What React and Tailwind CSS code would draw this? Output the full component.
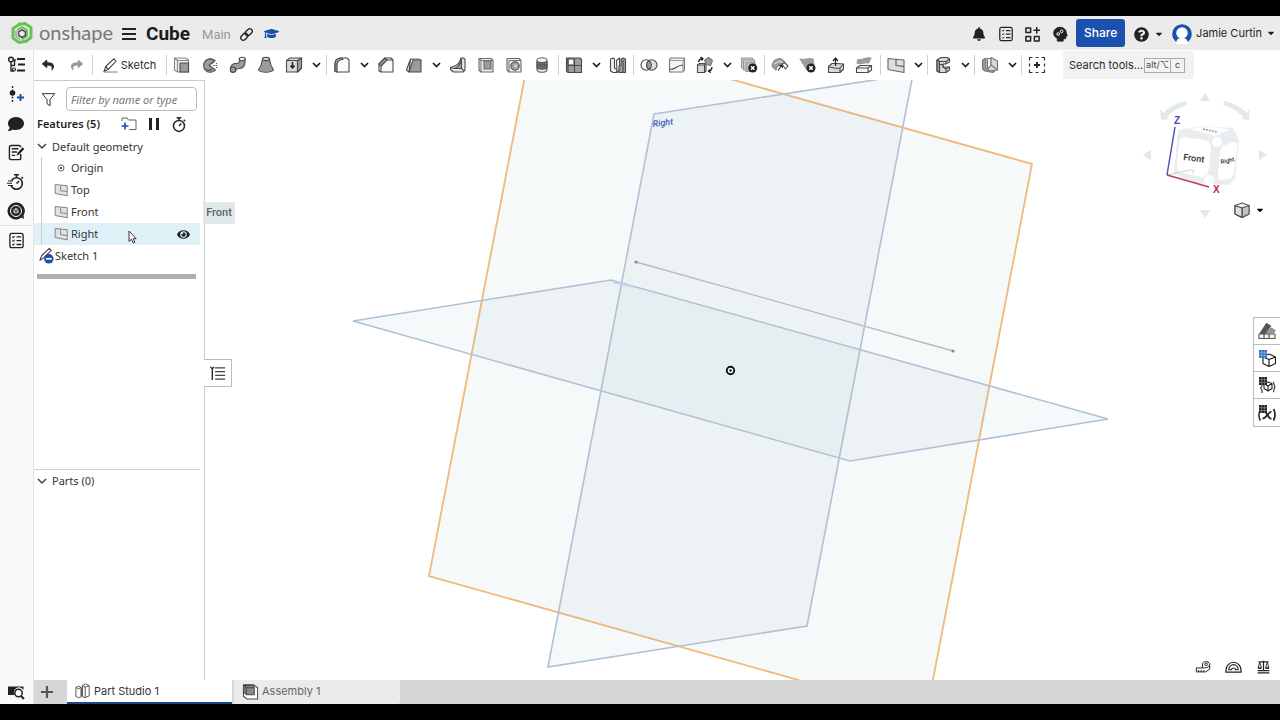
import React from "react";
import { FaReply, FaShare, FaBell, FaComment, FaGraduationCap, FaEye, FaQuestionCircle, FaCaretDown } from "react-icons/fa";

const Svg = ({ s = 18, children, className = "" }) => (
  <svg width={s} height={s} viewBox="0 0 18 18" fill="none" stroke="#4a4a4a" strokeWidth="1.1" strokeLinejoin="round" className={`shrink-0 ${className}`} aria-hidden="true">
    {children}
  </svg>
);

const G = "#9c9c9c";
const L = "#d9d9d9";

const Chevron = () => (
  <svg width="9" height="6" viewBox="0 0 9 6" fill="none" stroke="#1f1f1f" strokeWidth="1.7" aria-hidden="true">
    <path d="M1 1l3.500 3.500L8 1" />
  </svg>
);

const icons = {
  extrude: (
    <>
      <path d="M1.500 2h11l3 2v12H4.500l-3-2z" fill="#f3f3f3" stroke="#888" />
      <path d="M4.500 4.500v11.500M4.500 4.500h11M1.500 2l3 2.500" stroke="#888" />
      <path d="M7 7h8.500v9H7z" fill={G} />
    </>
  ),
  revolve: (
    <>
      <path d="M14 4.500A6.800 6.800 0 1 0 14.500 14L11 11.500 8 9l3.500-2z" fill={G} stroke="#555" />
      <path d="M14 4.500L10.500 7M4 6c1.500-3 5-3.500 7.500-2M3 12c2 3 6 3 8 1" stroke="#555" />
      <path d="M12 9.500h4.500M15.500 7v1M15.500 11v1" stroke="#555" strokeDasharray="1.500 1" />
    </>
  ),
  sweep: (
    <>
      <path d="M1.500 12.500c0-3.500 3-5 5-5 4 0 4-1 4-4.500l5.500-.5c.5 7-1.500 10-6 10-2.500 0-3 .5-3.500 3z" fill={G} />
      <ellipse cx="13.200" cy="3" rx="2.900" ry="1.800" fill="#eee" />
      <ellipse cx="4" cy="13.700" rx="2.700" ry="2.700" fill={G} />
    </>
  ),
  loft: (
    <>
      <path d="M5.500 3C5 8 3.500 11 1.500 14c2.500 3 12.500 3 15 0C14.500 11 13 8 12.500 3z" fill={G} />
      <ellipse cx="9" cy="3" rx="3.500" ry="1.600" fill="#ddd" />
    </>
  ),
  thicken: (
    <>
      <path d="M1.500 4.500L5 2h11.500v10L12.500 16h-11z" fill={L} />
      <path d="M1.500 4.500H12.500M12.500 5L16.500 2M12.500 5v11" />
      <path d="M12.500 5l4-3v10l-4 4z" fill={G} />
      <path d="M7.500 6v5M5.500 9.500l2 2.500 2-2.500" stroke="#222" strokeWidth="1.500" />
    </>
  ),
  fillet: (
    <>
      <path d="M2 15.500V8c0-3.500 2-6 6-6h6l2 2v12H4z" fill="#fafafa" />
      <path d="M2 8c0-3.500 2-6 6-6l2 1.500C6 3.500 4 6 4 9.500V16L2 15z" fill={G} />
    </>
  ),
  chamfer: (
    <>
      <path d="M2 15V8l6-6h6l2 2v12H4z" fill="#fafafa" />
      <path d="M2 8l6-6 2 2-6 6z" fill={G} />
      <path d="M4 10v6M10 4h6" />
    </>
  ),
  draft: (
    <>
      <path d="M5.500 3L1.500 14l2.500 2z" fill="#eee" />
      <path d="M8 4h8v12H4z" fill={G} />
      <path d="M5.500 3h8.500l2 1H8z" fill="#ddd" stroke="#777" />
    </>
  ),
  rib: (
    <>
      <path d="M1.500 11.500l4-1.500C9 9 11 6 12 2h2.500L16 3.500V14l-2 2H4.500l-3-2.500z" fill="#e5e5e5" />
      <path d="M5 12.500c4-1 6.500-4.500 7.500-9.500v9.500z" fill={G} />
      <path d="M5 12.500h7.500l2 2M1.500 11.500L5 12.500" />
    </>
  ),
  shell: (
    <>
      <path d="M2 2.500h12l2 2V16H4l-2-2z" fill="#f0f0f0" stroke="#666" />
      <path d="M7 5h7v8H7z" fill={G} stroke="#666" />
      <path d="M4 4.500V16M4 4.500L2 2.500M4 4.500h12" stroke="#777" />
    </>
  ),
  hole: (
    <>
      <path d="M2 2.500h12l2 2V16H4l-2-2z" fill="#f0f0f0" stroke="#666" />
      <path d="M4 4.500V16M4 4.500h12" stroke="#777" />
      <circle cx="10" cy="10" r="4.200" fill={G} />
      <circle cx="10.500" cy="10" r="1.700" fill="#ccc" stroke="none" />
    </>
  ),
  thread: (
    <>
      <path d="M4 4v10c1 3 9 3 10 0V4c-1-3-9-3-10 0z" fill="#f4f4f4" stroke="#666" />
      <path d="M4 5.500c2 1.500 8 1.500 10 0V12c-2 1.500-8 1.500-10 0z" fill="#777" stroke="#555" />
      <path d="M4 8c2 1 8 1 10 0M4 10c2 1 8 1 10 0" stroke="#555" />
    </>
  ),
  pattern: (
    <>
      <path d="M1.500 2H15l1.500 1.500v13H3l-1.500-1.500z" fill={G} />
      <path d="M3 3h6v6H3z" fill="#fff" />
      <path d="M9.500 3v13.500M3 9.500h13.500M3 3v13" />
    </>
  ),
  mirror: (
    <>
      <path d="M1.500 3L4 2l1.500 1v9L8 13v3.500H4L1.500 15z" fill="#eee" />
      <path d="M7.500 4.500L10.500 2v12l-2.500 2.500z" fill="#fff" />
      <path d="M12 3l2-1 2.500 1v13.500H10V10l2-.5z" fill={G} />
      <path d="M14 4v12" />
    </>
  ),
  boolean: (
    <>
      <circle cx="6.200" cy="9" r="5.200" fill="#fafafa" />
      <circle cx="11.800" cy="9" r="5.200" fill="#ddd" />
      <path d="M9 4.600a5.200 5.200 0 0 1 0 8.800a5.200 5.200 0 0 1 0-8.800z" fill={G} />
    </>
  ),
  split: (
    <>
      <path d="M1.500 3.500L3 2h13.500v12L15 16H1.500z" fill="#f4f4f4" stroke="#777" />
      <path d="M1.500 4.500H15L16.500 2M15 4.500V16" stroke="#999" />
      <path d="M1.500 13c5 2 7-4 13.500-4" />
    </>
  ),
  transform: (
    <>
      <path d="M1.500 9l2-1.500H10V15l-1.500 1.500h-7z" fill={L} />
      <path d="M1.500 9h7v7.500M8.500 9L10 7.500" />
      <path d="M8.500 4.500l4-3 4 3-2 5-4-1z" fill={G} stroke="#777" />
      <path d="M2.500 6c.5-2 2-3.500 4-3.500M4.500 1l2.500 1.500L5.500 4.500M16 11c0 2-1 3.500-3 4.500M15 16.500l-2.500-1 1-2" stroke="#222" strokeWidth="1.300" />
    </>
  ),
  deletePart: (
    <>
      <path d="M1.500 2h11v10h-11z" fill="#ccc" stroke="#999" />
      <path d="M3.500 4h11v10h-11z" fill="#ccc" stroke="#999" />
      <path d="M6 6.500h9v9H6z" fill="#bbb" stroke="#999" />
      <circle cx="12.700" cy="12" r="4.500" fill="#222" stroke="none" />
      <path d="M11 10.300l3.400 3.400m0-3.400L11 13.700" stroke="#fff" strokeWidth="1.500" />
    </>
  ),
  moveFace: (
    <>
      <path d="M1 10C1.500 5 6 1.500 10.500 3L14 6.500l-3 3.500C8 8 6 10 5 14z" fill={G} stroke="#888" />
      <path d="M3 8l6-3 4 3" stroke="#ddd" />
      <path d="M7 14.500l3.500-5M8 9.500l3-.5.500 3" stroke="#222" />
      <path d="M11 8l2.500-1.500 3.500 3.500-2.500 3z" fill="#fff" />
    </>
  ),
  deleteFace: (
    <>
      <path d="M1 3c4 2 8-2 13 0l1 6-7 5z" fill={G} stroke="#999" />
      <circle cx="12" cy="12" r="4.500" fill="#222" stroke="none" />
      <path d="M10.300 10.300l3.400 3.400m0-3.400l-3.400 3.400" stroke="#fff" strokeWidth="1.500" />
    </>
  ),
  replaceFace: (
    <>
      <path d="M1.500 10.500L5 7.500h5L16.500 8v5L13 16.500H1.500z" fill={L} />
      <path d="M1.500 11c4.500 0 6.500 2 11.500 1l3.500-4M13 12v4.500" />
      <path d="M8.500 10V2.500M6 5l2.500-3L11 5" stroke="#222" strokeWidth="1.300" />
    </>
  ),
  offset: (
    <>
      <path d="M3 3.500c4 1 8-3 13-1.500L13.500 7C9 6 6 9 2 7z" fill={G} stroke="#999" />
      <path d="M1.500 12l3.500-2.500h11.500V14L13 16.500H1.500z" fill="#f4f4f4" />
      <path d="M1.500 12H13l3.500-2.500M13 12v4.500" />
    </>
  ),
  plane: (
    <>
      <path d="M1 2.500L17 4v12.500L1 13.500z" fill="#dedede" stroke="#666" />
      <path d="M9 3.200v6.300l8 1" stroke="#555" />
    </>
  ),
  helix: (
    <>
      <path d="M3 4l4-2.500h6l2.500 1.500v3L12 8l-3 0v3l6.500 0v3L12 16.500H6L3 15z" fill={L} />
      <path d="M3 4l2.500 1.500H12L15.500 3M5.500 5.500v11M12 5.500V8M9 8v3l3 2 3.500-2M12 13v3.500M5.500 8.500H9" />
      <path d="M3 4l2.500 1.500v11L3 15z" fill={G} />
    </>
  ),
  sheet: (
    <>
      <path d="M1.500 4L5 2v11l9 1.500-2 2-8-1.500-2.500-2z" fill={G} stroke="#777" />
      <path d="M6.500 2.500H10V9l-3.500 4.500z" fill="#fff" stroke="#777" />
      <path d="M10 9V1.500L16.500 5v9L9.500 15l-3-1.500z" fill={L} stroke="#777" />
      <path d="M10 9l6.500 5" stroke="#777" />
    </>
  ),
  custom: (
    <>
      <path d="M1.500 4.500v-3h3M7.500 1.500h3M13.500 1.500h3v3M16.500 7.500v3M16.500 13.500v3h-3M10.500 16.500h-3M4.500 16.500h-3v-3M1.500 10.500v-3" stroke="#333" strokeWidth="1.200" />
      <path d="M9 6v6M6 9h6" stroke="#222" strokeWidth="1.900" />
    </>
  ),
};

const Tool = ({ name, menu }) => (
  <>
    <button aria-label={name} className="flex h-7 w-7 shrink-0 items-center justify-center">
      <Svg s={18}>{icons[name]}</Svg>
    </button>
    {menu && (
      <button aria-label={`${name} options`} className="flex h-7 w-4 shrink-0 items-center justify-center">
        <Chevron />
      </button>
    )}
  </>
);

const Sep = ({ tight }) => <span className={`mr-px h-5 w-px shrink-0 bg-[#d0d0d0] ${tight ? "ml-px" : "ml-0.5"}`} />;

const Checklist = ({ s = 17 }) => (
  <Svg s={s}>
    <rect x="2" y="1.500" width="14" height="15" rx="2" stroke="#222" strokeWidth="1.400" />
    <path d="M4.500 5l1 1L7 4.200M4.500 9l1 1L7 8.200M4.500 13l1 1L7 12.200" stroke="#222" />
    <path d="M9 5.200h5M9 9.200h5M9 13.200h5" stroke="#222" strokeWidth="1.400" />
  </Svg>
);

const Stopwatch = ({ s = 17, fast }) => (
  <Svg s={s}>
    <circle cx="9.500" cy="10.500" r="5.800" stroke="#222" strokeWidth="1.600" />
    <path d="M7 1.800h5M9.500 2v3M14.500 4l1.500 1.500M9.500 10.500l2.500-2.500" stroke="#222" strokeWidth="1.600" />
    {fast && (
      <>
        <path d="M0 7.500h5.500v5.500H0z" fill="#f9f9f9" stroke="none" />
        <path d="M1 8h5M0 10.300h5M1 12.500h5" stroke="#222" strokeWidth="1" />
      </>
    )}
  </Svg>
);

const Header = () => (
  <header className="flex h-[34px] shrink-0 items-center bg-[#ebebeb] pl-[11px] pr-1 text-[#222]">
    <svg width="22" height="24" viewBox="0 0 22 24" fill="none" className="shrink-0" aria-hidden="true">
      <path d="M7 3.500L14 2.500l6 4v10L14 21" stroke="#66c452" strokeWidth="3" strokeLinejoin="round" />
      <path d="M9.500 2.500L2 7.500v9.500l6 4.500 7.500-1.500" stroke="#66c452" strokeWidth="3" strokeLinejoin="round" />
      <path d="M6 9l5-3 5 3v6l-5 3.500" stroke="#66c452" strokeWidth="1.800" />
      <path d="M11 8.800l3.400 2v3.700L11 16.500l-3.400-2v-3.700z" stroke="#555" strokeWidth="1.600" />
      <path d="M5 9.500v6l4 3" stroke="#777" strokeWidth="1" />
    </svg>
    <span className="ml-1.5 w-[73px] pb-[3px] font-['Lato',sans-serif] text-[20px] leading-6 text-[#777]">onshape</span>
    <button aria-label="Main menu" className="ml-2.5 flex w-3.5 flex-col gap-[3px] pt-0.5">
      <span className="h-0.5 w-full bg-[#222]" />
      <span className="h-0.5 w-full bg-[#222]" />
      <span className="h-0.5 w-full bg-[#222]" />
    </button>
    <h1 className="ml-2.5 pt-px font-['Roboto',sans-serif] text-[19px] font-bold leading-6 text-[#1c1c1c]">Cube</h1>
    <span className="ml-3 pt-[3px] font-['Roboto',sans-serif] text-[13px] text-[#999]">Main</span>
    <button aria-label="Copy link" className="ml-2 pt-0.5">
      <Svg s={15}>
        <g transform="rotate(45 9 9)" stroke="#222" strokeWidth="1.600">
          <rect x="6" y="0.500" width="6" height="9.500" rx="3" />
          <rect x="6" y="8" width="6" height="9.500" rx="3" />
        </g>
      </Svg>
    </button>
    <button aria-label="Learning center" className="ml-2.5">
      <FaGraduationCap size={15} color="#1b4fa8" />
    </button>
    <div className="ml-auto flex items-center">
      <button aria-label="Notifications" className="flex w-[27px] justify-center pt-0.5"><FaBell size={14} /></button>
      <button aria-label="Tasks" className="flex w-[27px] justify-center pt-0.5"><Checklist s={16} /></button>
      <button aria-label="Apps" className="flex w-[27px] justify-center pt-0.5">
        <Svg s={17}>
          <path d="M2 2h5v5H2zM2 11h5v5H2zM11 11h5v5h-5zM13.500 1v7M10 4.500h7" stroke="#222" strokeWidth="1.600" />
        </Svg>
      </button>
      <button aria-label="AI advisor" className="flex w-[27px] justify-center pt-0.5">
        <Svg s={16}>
          <path d="M9 1.500c4.500 0 7 3 7 6.500l1.200 3-1.700.8v2.200l-3 .8V17H6v-3C3 12.500 2 10.500 2 8c0-3.800 3-6.500 7-6.500z" fill="#222" stroke="#222" />
          <circle cx="7" cy="9" r="1.500" stroke="#fff" strokeWidth="1.100" />
          <circle cx="10.800" cy="6" r="1.500" stroke="#fff" strokeWidth="1.100" />
        </Svg>
      </button>
      <button className="ml-[3px] h-7 w-[49px] rounded-[3px] bg-[#1b51ae] text-xs font-medium text-white">Share</button>
      <button aria-label="Help" className="ml-[9px] flex items-center gap-[5px] pt-0.5">
        <FaQuestionCircle size={15} />
        <FaCaretDown size={10} />
      </button>
      <button className="ml-2 flex items-center gap-1">
        <svg width="20" height="20" viewBox="0 0 20 20" className="mt-0.5" aria-hidden="true">
          <circle cx="10" cy="10" r="9.800" fill="#1b51ae" />
          <circle cx="10" cy="9" r="5.800" fill="#fff" />
          <path d="M4 20c0-4 2-6 6-6s6 2 6 6z" fill="#fff" />
        </svg>
        <span className="pt-px text-[11px]">Jamie Curtin</span>
        <FaCaretDown size={10} />
      </button>
    </div>
  </header>
);

const railBtn = "flex h-[29px] w-full shrink-0 items-center justify-center";

const Rail = () => (
  <nav aria-label="Side tools" className="flex w-[34px] shrink-0 flex-col border-r border-[#e4e4e4] bg-[#f9f9f9] pr-px text-[#222]">
    <button aria-label="Feature list" className="flex h-[30px] w-full items-center justify-center">
      <Svg s={18}>
        <circle cx="4" cy="3.500" r="2.300" stroke="#222" strokeWidth="1.500" />
        <path d="M4 5.800V15h3M4 9.500h3.500V4H9" stroke="#222" strokeWidth="1.400" />
        <circle cx="7" cy="13.500" r="1.500" stroke="#222" />
        <path d="M10 3h8M11 8.500h7M10 14.500h8" stroke="#222" strokeWidth="1.800" />
      </Svg>
    </button>
    <button aria-label="Add version" className={railBtn}>
      <Svg s={18}>
        <path d="M5.500 0v17" stroke="#222" strokeWidth="1.400" strokeDasharray="2 1.500" />
        <circle cx="5.500" cy="7" r="2.800" fill="#222" stroke="none" />
        <path d="M13.500 8v7M10 11.500h7" stroke="#1b51ae" strokeWidth="1.900" />
      </Svg>
    </button>
    <button aria-label="Comments" className={railBtn}><FaComment size={16} /></button>
    <button aria-label="Notes" className={railBtn}>
      <Svg s={17}>
        <path d="M13.500 10.500v4a2 2 0 0 1-2 2h-8a2 2 0 0 1-2-2v-11a2 2 0 0 1 2-2h8a2 2 0 0 1 2 2" stroke="#222" strokeWidth="1.500" />
        <path d="M4 5h7M4 8.500h5.500M4 12h3.500" stroke="#222" strokeWidth="1.400" />
        <path d="M9 12.500l1-3 5.500-6 1.800 1.700-5.500 6z" fill="#222" stroke="none" />
      </Svg>
    </button>
    <button aria-label="Performance" className={railBtn}><Stopwatch s={18} fast /></button>
    <button aria-label="Search part" className={railBtn}>
      <Svg s={18}>
        <path d="M9 .5a8.500 8.500 0 1 0 5.500 15l2.500 1.500-.5-3.500A8.500 8.500 0 0 0 9 .5z" fill="#222" stroke="none" />
        <circle cx="9" cy="9" r="5.500" stroke="#fff" strokeWidth="1" />
        <path d="M9 6l2.600 1.500v3L9 12l-2.600-1.500v-3z" fill="#ccc" stroke="none" />
        <path d="M6.400 7.500L9 9l2.600-1.500M9 9v3" stroke="#222" strokeWidth=".8" />
      </Svg>
    </button>
    <div className="h-px bg-[#e0e0e0]" />
    <button aria-label="Checklist" className={railBtn}><Checklist s={17} /></button>
    <button aria-label="Tab search" className="mt-auto flex h-6 w-full items-center justify-center">
      <Svg s={18}>
        <path d="M1 3.500h15.500V7a5 5 0 0 0-9 5H1z" fill="#222" stroke="none" />
        <circle cx="11.500" cy="10" r="3.700" fill="#fff" stroke="#222" strokeWidth="1.500" />
        <path d="M14 13l3 3" stroke="#222" strokeWidth="1.900" />
      </Svg>
    </button>
  </nav>
);

const Toolbar = () => (
  <div role="toolbar" aria-label="Features" className="flex h-[30px] shrink-0 items-center overflow-hidden bg-white text-[#2a2a2a]">
    <button aria-label="Undo" className="flex h-7 w-7 shrink-0 items-center justify-center"><FaReply size={12} /></button>
    <button aria-label="Redo" className="flex h-7 w-[30px] shrink-0 items-center justify-center text-[#9a9a9a]"><FaShare size={12} /></button>
    <span className="h-5 w-px shrink-0 bg-[#d0d0d0]" />
    <button className="flex h-7 w-[72px] shrink-0 items-center justify-center gap-0.5 text-[11px]">
      <Svg s={17}>
        <path d="M2 15.500L4 10 12.500 2l2.500 2.500-8.500 8.500zM4 10l2.500 3" stroke="#333" />
        <path d="M2 15.900h14.500" stroke="#8a94a8" strokeWidth="1.300" />
      </Svg>
      Sketch
    </button>
    <Sep tight />
    <Tool name="extrude" /><Tool name="revolve" /><Tool name="sweep" /><Tool name="loft" /><Tool name="thicken" menu />
    <Sep />
    <Tool name="fillet" menu /><Tool name="chamfer" /><Tool name="draft" menu /><Tool name="rib" /><Tool name="shell" /><Tool name="hole" /><Tool name="thread" />
    <Sep />
    <Tool name="pattern" menu /><Tool name="mirror" />
    <Sep tight />
    <Tool name="boolean" /><Tool name="split" /><Tool name="transform" menu /><Tool name="deletePart" />
    <Sep tight />
    <Tool name="moveFace" /><Tool name="deleteFace" /><Tool name="replaceFace" /><Tool name="offset" />
    <Sep />
    <Tool name="plane" menu />
    <Sep tight />
    <Tool name="helix" menu />
    <Sep tight />
    <Tool name="sheet" menu />
    <Sep tight />
    <Tool name="custom" />
    <button className="ml-3 flex h-7 w-[131px] shrink-0 items-center rounded-[3px] bg-[#f2f2f2] pl-1.5 text-[11px]">
      <span className="w-[75px] whitespace-nowrap text-left">Search tools...</span>
      <kbd className="flex h-[15px] w-[27px] items-center justify-center whitespace-nowrap border border-[#aaa] font-['Inter',sans-serif] text-[9px] text-[#444]">alt/⌥</kbd>
      <kbd className="flex h-[15px] w-3.5 items-center justify-center border border-l-0 border-[#aaa] font-['Inter',sans-serif] text-[9px] text-[#444]">c</kbd>
    </button>
  </div>
);

const PlaneIcon = () => (
  <Svg s={14}>
    <path d="M1.500 2L17 3.500v13L1.500 13.500z" fill="#e2e2e2" stroke="#888" strokeWidth="1.300" />
    <path d="M8.500 3v7l8.500 1" stroke="#888" strokeWidth="1.300" />
  </Svg>
);

const Row = ({ icon, label, active }) => (
  <li className={`mr-1 flex h-[22px] items-center ${active ? "bg-[#dff0f6]" : ""}`}>
    <span className="ml-[7px] flex h-full w-[27px] shrink-0 items-center justify-end border-l border-[#ccc]">{icon}</span>
    <span className="ml-[3px] flex-1">{label}</span>
    {active && (
      <button aria-label={`Hide ${label}`} className="mr-2.5 text-[#222]"><FaEye size={13} /></button>
    )}
  </li>
);

const Panel = () => (
  <aside className="relative z-10 flex w-[171px] shrink-0 flex-col border-r border-t border-[#ccc] bg-white font-['Noto_Sans',sans-serif] text-[11px] leading-4 text-[#333]">
    <div className="flex items-center pl-[7px] pt-1.5">
      <Svg s={15}>
        <path d="M1.500 2h15l-5.700 7v7.500L7.200 14V9z" stroke="#333" strokeWidth="1.200" />
      </Svg>
      <input aria-label="Filter by name or type" placeholder="Filter by name or type" className="ml-2.5 h-6 w-[131px] rounded-sm border border-[#bbb] px-1 text-[11px] italic placeholder:text-[#777]" />
    </div>
    <div className="mt-0.5 flex h-[22px] items-center pl-[3px] text-[#1f1f1f]">
      <h2 className="w-[84px] whitespace-nowrap font-semibold">Features (5)</h2>
      <button aria-label="Add folder">
        <svg width="16" height="14" viewBox="0 0 16 14" fill="none" aria-hidden="true">
          <path d="M1 4V1h5l1.500 2H15v9.500H8" stroke="#666" />
          <path d="M4 5.500v7M.5 9h7" stroke="#1b51ae" strokeWidth="1.700" />
        </svg>
      </button>
      <button aria-label="Suspend regeneration" className="ml-3 flex gap-1">
        <span className="h-3 w-[3px] bg-[#222]" />
        <span className="h-3 w-[3px] bg-[#222]" />
      </button>
      <button aria-label="Regeneration times" className="ml-[11px]"><Stopwatch s={17} /></button>
    </div>
    <button className="flex h-[22px] items-center gap-[5px] pl-[3px] pt-px text-left">
      <svg width="10" height="7" viewBox="0 0 10 7" fill="none" stroke="#444" strokeWidth="1.500" aria-hidden="true"><path d="M1 1l4 4 4-4" /></svg>
      Default geometry
    </button>
    <ul>
      <Row label="Origin" icon={<Svg s={10} className="mr-0.5"><circle cx="9" cy="9" r="5.500" stroke="#555" strokeWidth="1.600" /><circle cx="9" cy="9" r="2" fill="#333" stroke="none" /></Svg>} />
      <Row label="Top" icon={<PlaneIcon />} />
      <Row label="Front" icon={<PlaneIcon />} />
      <Row label="Right" icon={<PlaneIcon />} active />
    </ul>
    <div className="flex h-[21px] items-center pl-1">
      <Svg s={17}>
        <path d="M2 14L4 9l8-7.500 2 2L6 11.500z" stroke="#444" />
        <circle cx="11.500" cy="12.500" r="5" fill="#1b51ae" stroke="none" />
        <path d="M8.500 12.500h6" stroke="#fff" strokeWidth="1.800" />
      </Svg>
      Sketch 1
    </div>
    <div className="ml-[3px] mr-2 mt-2 h-[5px] bg-[#b0b0b0]" />
    <section className="mb-[188px] mr-1 mt-auto border-t border-[#d0d0d0]">
      <button className="flex h-[22px] items-center gap-[5px] pl-[3px]">
        <svg width="10" height="7" viewBox="0 0 10 7" fill="none" stroke="#444" strokeWidth="1.500" aria-hidden="true"><path d="M1 1l4 4 4-4" /></svg>
        Parts (0)
      </button>
    </section>
    <svg className="absolute left-[94px] top-[149px]" width="9" height="14" viewBox="0 0 9 14" aria-hidden="true">
      <path d="M1 1v10.500l2.500-2.300 1.700 3.800 1.600-.7L5.200 8.700h3z" fill="#fff" stroke="#333" />
    </svg>
    <div className="absolute left-[169px] top-[121px] flex h-[22px] w-8 items-center justify-center bg-[#dde5e8]/90 font-['Roboto',sans-serif] text-[11px] font-medium text-[#5c6468]">Front</div>
    <button aria-label="Toggle feature list" className="absolute left-[170px] top-[278px] flex h-7 w-7 items-center justify-center border border-l-0 border-[#bbb] bg-white">
      <Svg s={17}>
        <path d="M1.500 2l2 2 2-2M3.500 4v12" stroke="#222" strokeWidth="1.400" />
        <path d="M6.500 3H17M6.500 7H17M6.500 11H17M6.500 15H17" stroke="#444" strokeWidth="1.200" />
      </Svg>
    </button>
  </aside>
);

const Grid = ({ blue }) => (
  <>
    <path d="M1 1h8v8H1z" fill={blue ? "#3a74c8" : "#222"} stroke="none" />
    <path d="M3.700 1v8M6.400 1v8M1 3.700h8M1 6.400h8" stroke={blue ? "#8fb2e6" : "#999"} strokeWidth=".6" />
  </>
);

const sideTabs = [
  ["Appearance", <><path d="M1 12h16v4.500H1z" fill="#f4f4f4" stroke="#555" /><path d="M2 11.500l6.500-10 4 2.500-5 7.500z" fill="#555" stroke="#555" /><path d="M9 11.500l4-5.500 4 2.500-2 3z" fill="#999" stroke="#888" /><path d="M6 12v4.500M11 12v4.500" /></>],
  ["Configurations", <><path d="M11 5l6.500 3v6.500l-6.500 3-6-3V8zM5 8l6 2.500L17.500 8M11 10.500v7" stroke="#222" strokeWidth="1.200" fill="#fff" /><Grid blue /></>],
  ["Configured properties", <><path d="M10 6l4 1.500v5L10 15l-4-2.500v-5zM6 7.500L10 10l4-2.500M10 10v5" stroke="#222" /><path d="M4 7v3L2.500 12 4 14v3M15 6c1.500 0 .5 4 2 5-1.500 1-.5 5-2 5" stroke="#222" /><Grid /></>],
  ["Variables", <><path d="M2.500 6c-2 3-2 7.500 0 10.500M15.500 5c2 3 2 8 0 11.500" stroke="#222" strokeWidth="1.700" /><path d="M6 8c3-1.500 4 7.500 7.500 6.500M13.500 7.500c-3 0-5 7-9 7" stroke="#222" strokeWidth="1.700" /><Grid /></>],
];

const ViewCube = () => (
  <svg width="130" height="130" viewBox="1140 90 130 130" className="absolute right-2.5 top-2.5" role="img" aria-label="View cube">
    <g fill="#e2e9ea">
      <path d="M1205 93l5.500 8h-11zM1205 218l5.500-8h-11zM1143 155l8-5.500v11zM1267 155l-8-5.500v11z" />
      <path d="M1160 109l1 11 8-1-2-2c5-5 10-9 20-12l-1-4c-10 2-18 7-23 12zM1250 109l-1 11-8-1 2-2c-5-5-10-9-20-12l1-4c10 2 18 7 23 12z" />
    </g>
    <path d="M1178 130l27-4 28 2 6 11-4 40-6 6-34-2-21-9z" fill="#e9edf0" />
    <path d="M1189 129l23-3 18 4-15 6z" fill="#fcfdfd" />
    <path d="M1184 137l20 3q7 1 7 8l-2 21q-1 8-8 8l-18-4q-7-1-6-8l2-21q1-7 5-7z" fill="#fff" />
    <path d="M1223 146l10-4q5-1 4 6l-3 23q-1 7-6 8l-8 1q-3-1-2-6l2-21q1-6 3-7z" fill="#fff" />
    <circle cx="1217" cy="142" r="5" fill="#fff" />
    <circle cx="1209" cy="180" r="5" fill="#fff" />
    <path d="M1167 175l23-5" stroke="#b5dfb5" strokeWidth="1" />
    <path d="M1175 127l-8 48" stroke="#5353bb" strokeWidth="1.500" />
    <path d="M1167 175l42 12" stroke="#c03860" strokeWidth="1.500" />
    <g fontFamily="Liberation Sans, sans-serif">
      <text x="1174" y="124" fontSize="10" fontWeight="bold" fill="#4848b8">Z</text>
      <text x="1213" y="193" fontSize="10" fontWeight="bold" fill="#c02848">X</text>
      <text x="1190" y="174" fontSize="8" fill="#cfe3b4">Y</text>
      <text x="1183" y="160" fontSize="9" fontFamily="Roboto, sans-serif" fontWeight="500" fill="#333" transform="rotate(7 1183 160)">Front</text>
      <text x="1221" y="164" fontSize="6" fontFamily="Roboto, sans-serif" fontWeight="500" fill="#333" transform="rotate(-12 1221 164)">Right</text>
    </g>
    <path d="M1203 129l14 3" stroke="#999" strokeWidth="1.500" strokeDasharray="2 1" />
  </svg>
);

const Canvas = () => (
  <main className="relative min-w-0 flex-1 overflow-hidden bg-white">
    <svg viewBox="205 80 1075 600" preserveAspectRatio="xMidYMid slice" className="absolute inset-0 h-full w-full" role="img" aria-label="Model view">
      <g fill="#8fb8c4" fillOpacity=".08">
        <path d="M535 24L1032 164L926 716L429 576z" stroke="#f0b97a" strokeWidth="1.800" />
        <path d="M654 114L913 74L807 626L548 667z" stroke="#b0c1d2" strokeWidth="1.600" />
        <path d="M353 321L611 280L1108 419L850 461z" stroke="#b0c1d4" strokeWidth="1.600" />
      </g>
      <path d="M613 282l22 5" stroke="#c4d0e8" strokeWidth="2" />
      <path d="M636 262L953 351" stroke="#b8babe" strokeWidth="1.300" />
      <circle cx="636" cy="262" r="1.600" fill="#888" />
      <circle cx="953" cy="351" r="1.600" fill="#888" />
      <circle cx="730.500" cy="370.500" r="3.700" fill="#fff" stroke="#111" strokeWidth="1.900" />
      <circle cx="730.500" cy="370.500" r="1.300" fill="#111" />
      <text x="653" y="127" fontSize="9" fontStyle="italic" fontWeight="500" fill="#3a5cc0" fontFamily="Roboto, sans-serif" transform="rotate(-7 653 127)">Right</text>
    </svg>
    <ViewCube />
    <button aria-label="View options" className="absolute right-[15px] top-[121px] flex items-center gap-1">
      <Svg s={18}>
        <path d="M9 2l7 2.500v8.500l-7 3.500L2 13V4.500z" fill="#f4f4f4" stroke="#555" />
        <path d="M9 7l7-2.500v8.500l-7 3.500z" fill="#c4c4c4" stroke="#555" />
        <path d="M2 4.500L9 7v9.500L2 13z" fill="#ddd" stroke="#444" />
      </Svg>
      <FaCaretDown size={10} />
    </button>
    <div className="absolute right-0 top-[237px] flex w-[27px] flex-col divide-y divide-[#bbb] border border-r-0 border-[#bbb] bg-white">
      {sideTabs.map(([label, icon]) => (
        <button key={label} aria-label={label} className="flex h-[27px] items-center justify-center"><Svg s={18}>{icon}</Svg></button>
      ))}
    </div>
    <div className="absolute bottom-[5px] right-[9px] flex gap-3.5">
      <button aria-label="Measure">
        <Svg s={16}>
          <path d="M1.500 10h9c4 0 6-1.500 6-4 0-4-8-4-8-.5V10M1.500 10v4.500H12l4.500-3V6" stroke="#222" />
          <circle cx="12.500" cy="6" r="1.500" stroke="#222" />
          <path d="M4 14.500v-2M7 14.500v-2M10 14.500v-2" stroke="#222" />
        </Svg>
      </button>
      <button aria-label="Protractor">
        <Svg s={17}>
          <path d="M1 15v-2a8 8.500 0 0 1 16 0v2z" stroke="#222" strokeWidth="1.300" />
          <path d="M4 12.500a5 5.500 0 0 1 10 0h-3a2 2 0 0 0-4 0z" stroke="#222" />
        </Svg>
      </button>
      <button aria-label="Mass properties">
        <Svg s={15}>
          <path d="M3 3.500h12M9 2v12M2 16.500h14M2 14h14" stroke="#222" strokeWidth="1.500" />
          <path d="M4.500 4L2.500 10.500h4zM13.500 4l-2 6.500h4z" stroke="#222" />
          <path d="M2 10.500h5l-1 1.500H3zM11 10.500h5l-1 1.500h-3z" fill="#222" stroke="none" />
        </Svg>
      </button>
    </div>
  </main>
);

const Tabs = () => (
  <div role="tablist" className="flex h-6 shrink-0 bg-[#d6d6d6] text-[11px]">
    <button aria-label="New tab" className="flex w-8 items-center pl-1.5">
      <svg width="14" height="14" viewBox="0 0 14 14" stroke="#555" strokeWidth="2.200" aria-hidden="true"><path d="M7 1v12M1 7h12" /></svg>
    </button>
    <button role="tab" aria-selected="true" className="ml-px flex w-[165px] items-center gap-[3px] border-b-2 border-[#1b4684] bg-white pl-2 text-[#333]">
      <Svg s={16}>
        <path d="M1 5l3-1.500 3 1.500v10.500l-3 1L1 15zM1 5l3 1.500L7 5M7 5v10M8.500 3l3.500-2 4 2v11.500L11 16.500l-2.500-1zM8.500 3l3 1.500L16 3M11.500 4.500v12" stroke="#555" />
      </Svg>
      <span>Part Studio 1</span>
    </button>
    <button role="tab" aria-selected="false" className="ml-0.5 flex w-[166px] items-center gap-[3px] rounded-br-[3px] bg-[#ebebeb] pb-px pl-2 text-[#666]">
      <Svg s={17}>
        <path d="M1.500 2h11l4 3v12H5.500l-4-3z" fill="#fff" />
        <path d="M2 2.500h9.500L13 4v8.500H5L2 10z" fill="#8a8a8a" />
        <path d="M4.500 5H13M4.500 5v7.500M4.500 5L2 2.500" stroke="#444" />
      </Svg>
      <span>Assembly 1</span>
    </button>
  </div>
);

export default function App() {
  return (
    <div className="flex h-screen flex-col bg-black py-4 font-['Inter',sans-serif]">
      <Header />
      <div className="flex min-h-0 flex-1">
        <Rail />
        <div className="flex min-w-0 flex-1 flex-col">
          <Toolbar />
          <div className="flex min-h-0 flex-1">
            <Panel />
            <Canvas />
          </div>
          <Tabs />
        </div>
      </div>
    </div>
  );
}
